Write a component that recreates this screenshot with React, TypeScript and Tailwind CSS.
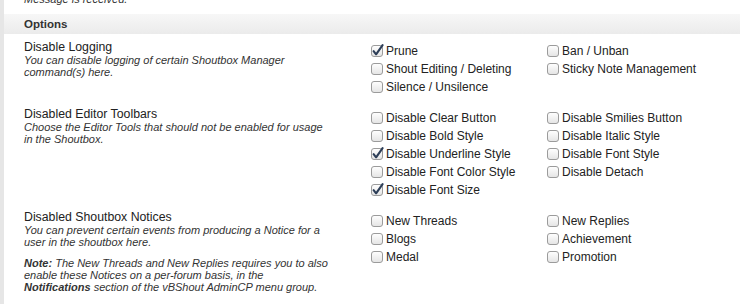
const font = { fontFamily: '"Liberation Sans", Arial, sans-serif' };

type Opt = { label: string; checked?: boolean };

type Section = {
  title: string;
  desc: string[];
  note?: boolean;
  options: Opt[];
};

const sections: Section[] = [
  {
    title: "Disable Logging",
    desc: ["You can disable logging of certain Shoutbox Manager", "command(s) here."],
    options: [
      { label: "Prune", checked: true },
      { label: "Ban / Unban" },
      { label: "Shout Editing / Deleting" },
      { label: "Sticky Note Management" },
      { label: "Silence / Unsilence" },
    ],
  },
  {
    title: "Disabled Editor Toolbars",
    desc: ["Choose the Editor Tools that should not be enabled for usage", "in the Shoutbox."],
    options: [
      { label: "Disable Clear Button" },
      { label: "Disable Smilies Button" },
      { label: "Disable Bold Style" },
      { label: "Disable Italic Style" },
      { label: "Disable Underline Style", checked: true },
      { label: "Disable Font Style" },
      { label: "Disable Font Color Style" },
      { label: "Disable Detach" },
      { label: "Disable Font Size", checked: true },
    ],
  },
  {
    title: "Disabled Shoutbox Notices",
    desc: ["You can prevent certain events from producing a Notice for a", "user in the shoutbox here."],
    note: true,
    options: [
      { label: "New Threads" },
      { label: "New Replies" },
      { label: "Blogs" },
      { label: "Achievement" },
      { label: "Medal" },
      { label: "Promotion" },
    ],
  },
];

const Checkbox = ({ checked }: { checked?: boolean }) => (
  <svg width="12" height="12" viewBox="0 0 12 12" className="shrink-0 overflow-visible">
    <defs>
      <linearGradient id="cbg" x1="0" y1="0" x2="0" y2="1">
        <stop offset="0" stopColor="#ffffff" />
        <stop offset="1" stopColor="#e4e4e4" />
      </linearGradient>
    </defs>
    <rect x="0.5" y="0.5" width="11" height="11" rx="2.5" fill="url(#cbg)" stroke="#9b9b9b" />
    {checked && (
      <path
        d="M2.6 6.2 L5.1 9.3 L11.6 0.2"
        fill="none"
        stroke="#2d3e58"
        strokeWidth="2.1"
        strokeLinecap="round"
        strokeLinejoin="round"
      />
    )}
  </svg>
);

const App = () => {
  return (
    <div className="w-[740px] h-[304px] overflow-hidden bg-white border-l-4 border-[#e6e6e6]" style={font}>
      <div className="pl-5 -mt-[7px] text-[11px] leading-[12px] italic text-[#333]">
        Message is received.
      </div>

      <div className="mt-[9px] h-5 pl-5 bg-gradient-to-b from-[#f7f7f7] to-[#ebebeb] text-[11.5px] leading-5 font-bold text-[#333]">
        Options
      </div>

      {sections.map((s) => (
        <div key={s.title} className="flex pl-5 pt-[6px] pb-[5px]">
          <div className="w-[347px] shrink-0">
            <div className="text-[12.3px] leading-[14px] text-[#222]">{s.title}</div>
            <div className="text-[11px] leading-[12px] italic text-[#333] whitespace-nowrap">
              {s.desc[0]}
              <br />
              {s.desc[1]}
            </div>
            {s.note && (
              <div className="mt-[9px] text-[11px] leading-[12px] italic text-[#333] whitespace-nowrap">
                <b>Note:</b> The New Threads and New Replies requires you to also
                <br />
                enable these Notices on a per-forum basis, in the
                <br />
                <b>Notifications</b> section of the vBShout AdminCP menu group.
              </div>
            )}
          </div>

          <div className="pt-[2px] grid grid-cols-[176px_176px] content-start">
            {s.options.map((o) => (
              <label key={o.label} className="h-[18px] flex items-center gap-[3px] text-[12px] text-[#222] whitespace-nowrap">
                <Checkbox checked={o.checked} />
                <span>{o.label}</span>
              </label>
            ))}
          </div>
        </div>
      ))}
    </div>
  );
};

export default App;
